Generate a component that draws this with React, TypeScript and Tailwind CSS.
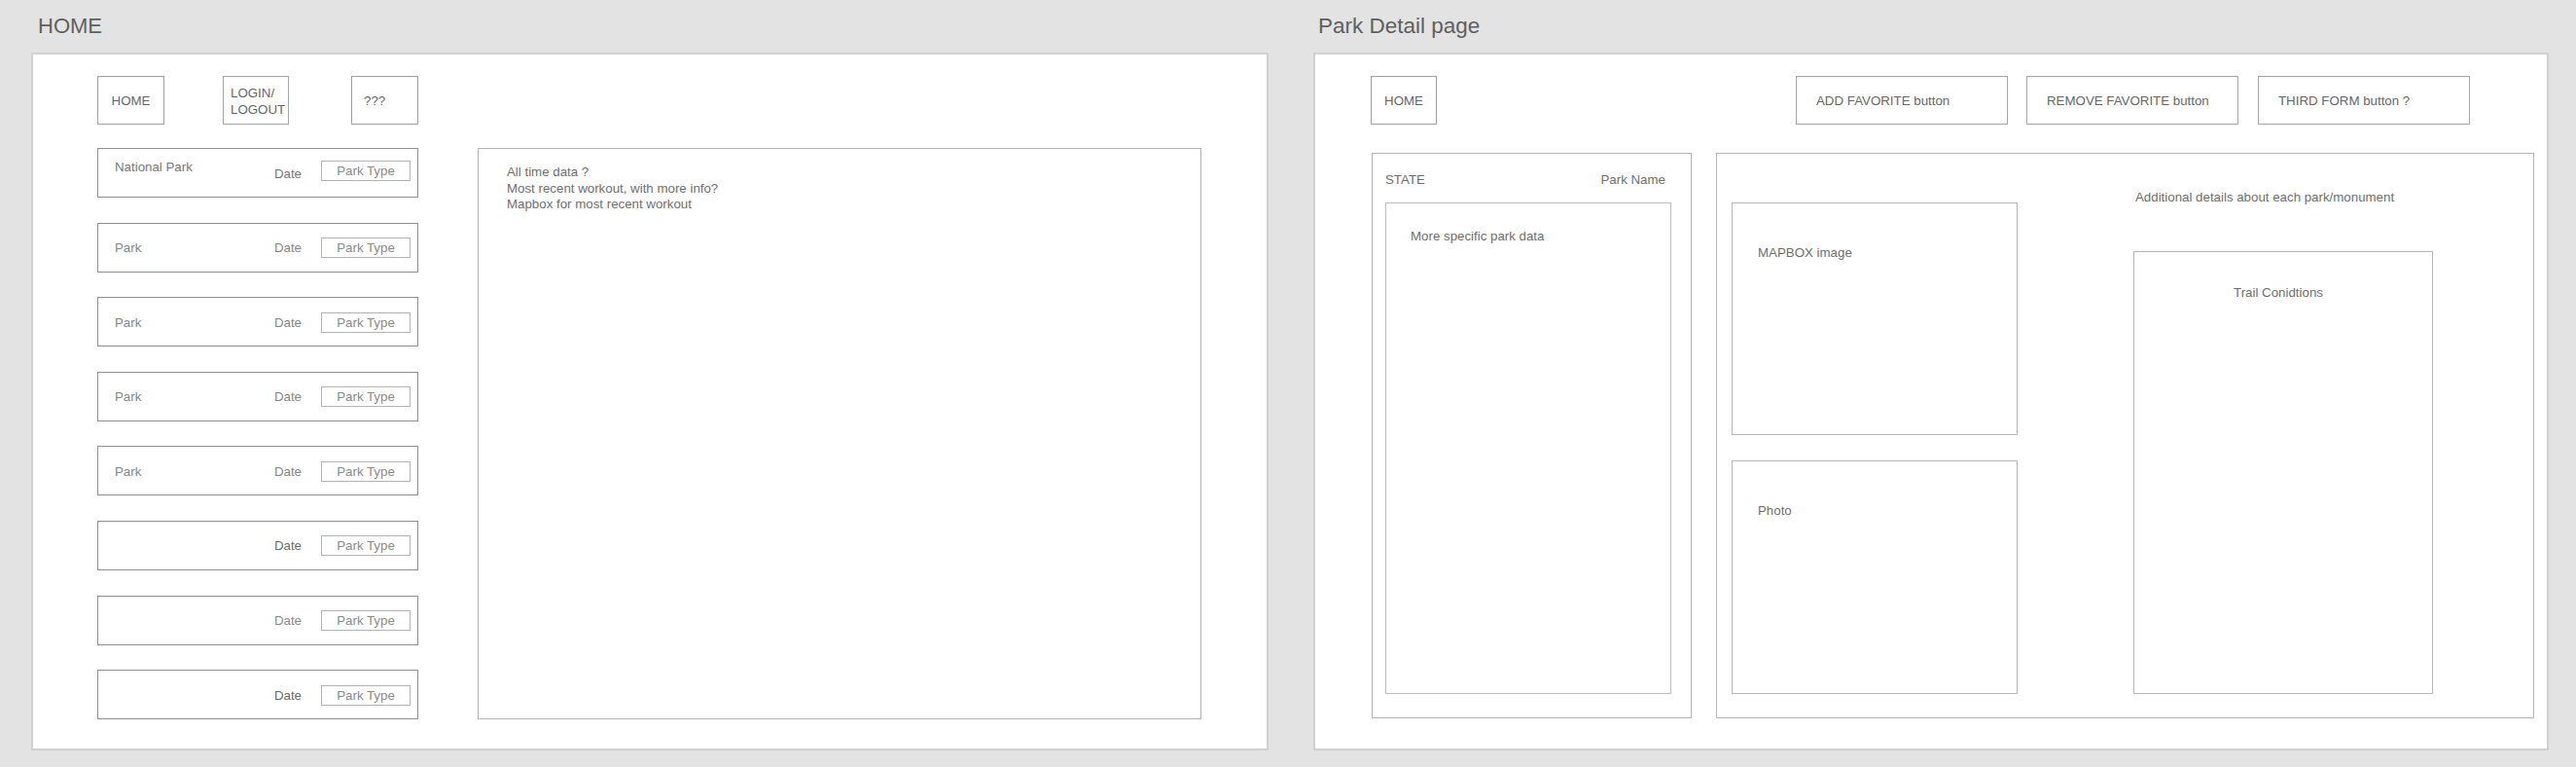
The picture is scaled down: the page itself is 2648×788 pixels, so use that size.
const cards = [
  { name: "National Park", first: true, dateTone: "text-[#767676]" },
  { name: "Park", dateTone: "text-[#858585]" },
  { name: "Park", dateTone: "text-[#858585]" },
  { name: "Park", dateTone: "text-[#858585]" },
  { name: "Park", dateTone: "text-[#858585]" },
  { name: "", dateTone: "text-[#6a6a6a]" },
  { name: "", dateTone: "text-[#8a8a8a]" },
  { name: "", dateTone: "text-[#6a6a6a]" },
];

function ParkCard({ name, first, dateTone }: { name: string; first?: boolean; dateTone: string }) {
  return (
    <div className="flex h-[51px] items-center border border-[#8e8e8e] pl-[17px] pr-[7px] pt-[2px]">
      <span className={first ? "mt-[9px] flex-1 self-start text-[#777]" : "flex-1 text-[#858585]"}>{name}</span>
      <span className={dateTone}>Date</span>
      <span
        className={
          "ml-[20px] flex h-[21px] w-[92px] items-center justify-center border border-[#b3b3b3] pt-px text-[#8a8a8a] " +
          (first ? "mb-[6px]" : "-mt-px")
        }
      >
        Park Type
      </span>
    </div>
  );
}

export default function App() {
  return (
    <div className="flex h-[788px] w-[2648px] bg-[#e3e3e3] pl-[32px] font-['Liberation_Sans',Arial,sans-serif] text-[13.3px] leading-[16px] text-[#6e6e6e]">
      {/* HOME wireframe */}
      <section className="flex w-[1272px] flex-col">
        <h1 className="h-[54px] pl-[7px] pt-[16px] text-[22px] leading-[22px] text-[#5f5f5f]">HOME</h1>
        <div className="h-[717px] border-2 border-[#d0d0d0] bg-white pl-[66px] pt-[22px]">
          <nav className="flex h-[50px] text-[#666]">
            <div className="flex w-[69px] items-center justify-center border border-[#9f9f9f] pt-[2px]">HOME</div>
            <div className="ml-[60px] flex w-[68px] items-center border border-[#a5a5a5] pl-[7px] pt-[2px] leading-[17px]">
              <span>
                LOGIN/
                <br />
                LOGOUT
              </span>
            </div>
            <div className="ml-[64px] flex w-[69px] items-center border border-[#9f9f9f] pl-[12px] pt-[2px]">???</div>
          </nav>

          <div className="mt-[24px] flex">
            <div className="flex w-[330px] flex-col gap-[25.6px]">
              {cards.map((c, i) => (
                <ParkCard key={i} {...c} />
              ))}
            </div>
            <div className="ml-[61px] w-[744px] border border-[#b2b2b2] pl-[29px] pt-[16px] leading-[16.5px] text-[#6f6f6f]">
              <p>All time data ?</p>
              <p>Most recent workout, with more info?</p>
              <p>Mapbox for most recent workout</p>
            </div>
          </div>
        </div>
      </section>

      {/* Park detail wireframe */}
      <section className="ml-[46px] flex w-[1270px] flex-col">
        <h1 className="h-[54px] pl-[5px] pt-[16px] text-[22.5px] leading-[22px] text-[#5f5f5f]">Park Detail page</h1>
        <div className="h-[717px] border-2 border-[#d0d0d0] bg-white pl-[57px] pt-[22px]">
          <nav className="flex h-[50px] pr-[79px] text-[#666]">
            <div className="flex w-[68px] items-center justify-center border border-[#9f9f9f] pt-[2px]">HOME</div>
            <div className="ml-auto flex w-[218px] items-center border border-[#a5a5a5] pl-[20px] pt-[2px]">ADD FAVORITE button</div>
            <div className="ml-[19px] flex w-[218px] items-center border border-[#a5a5a5] pl-[20px] pt-[2px]">REMOVE FAVORITE button</div>
            <div className="ml-[20px] flex w-[218px] items-center border border-[#a5a5a5] pl-[20px] pt-[2px]">THIRD FORM button ?</div>
          </nav>

          <div className="mt-[29px] flex h-[581px]">
            <div className="ml-px flex w-[329px] flex-col border border-[#b4b4b4] pb-[24px] pl-[13px] pr-[20px] pt-[19px]">
              <div className="flex h-[16px] justify-between pr-[6px]">
                <span>STATE</span>
                <span>Park Name</span>
              </div>
              <div className="mt-[15px] flex-1 border border-[#bdbdbd] pl-[25px] pt-[26px]">More specific park data</div>
            </div>

            <div className="ml-[25px] flex w-[841px] border border-[#b4b4b4] pb-[24px] pl-[15px]">
              <div className="flex w-[294px] flex-col gap-[26px] pt-[50px]">
                <div className="h-[239px] border border-[#b5b5b5] pl-[26px] pt-[43px]">MAPBOX image</div>
                <div className="flex-1 border border-[#b5b5b5] pl-[26px] pt-[43px]">Photo</div>
              </div>
              <div className="ml-[119px] flex w-[308px] flex-col pt-[37px]">
                <p className="h-[16px] pl-[2px]">Additional details about each park/monument</p>
                <div className="mt-[47px] flex-1 border border-[#b5b5b5] pr-[10px] pt-[34px] text-center">Trail Conidtions</div>
              </div>
            </div>
          </div>
        </div>
      </section>
    </div>
  );
}
